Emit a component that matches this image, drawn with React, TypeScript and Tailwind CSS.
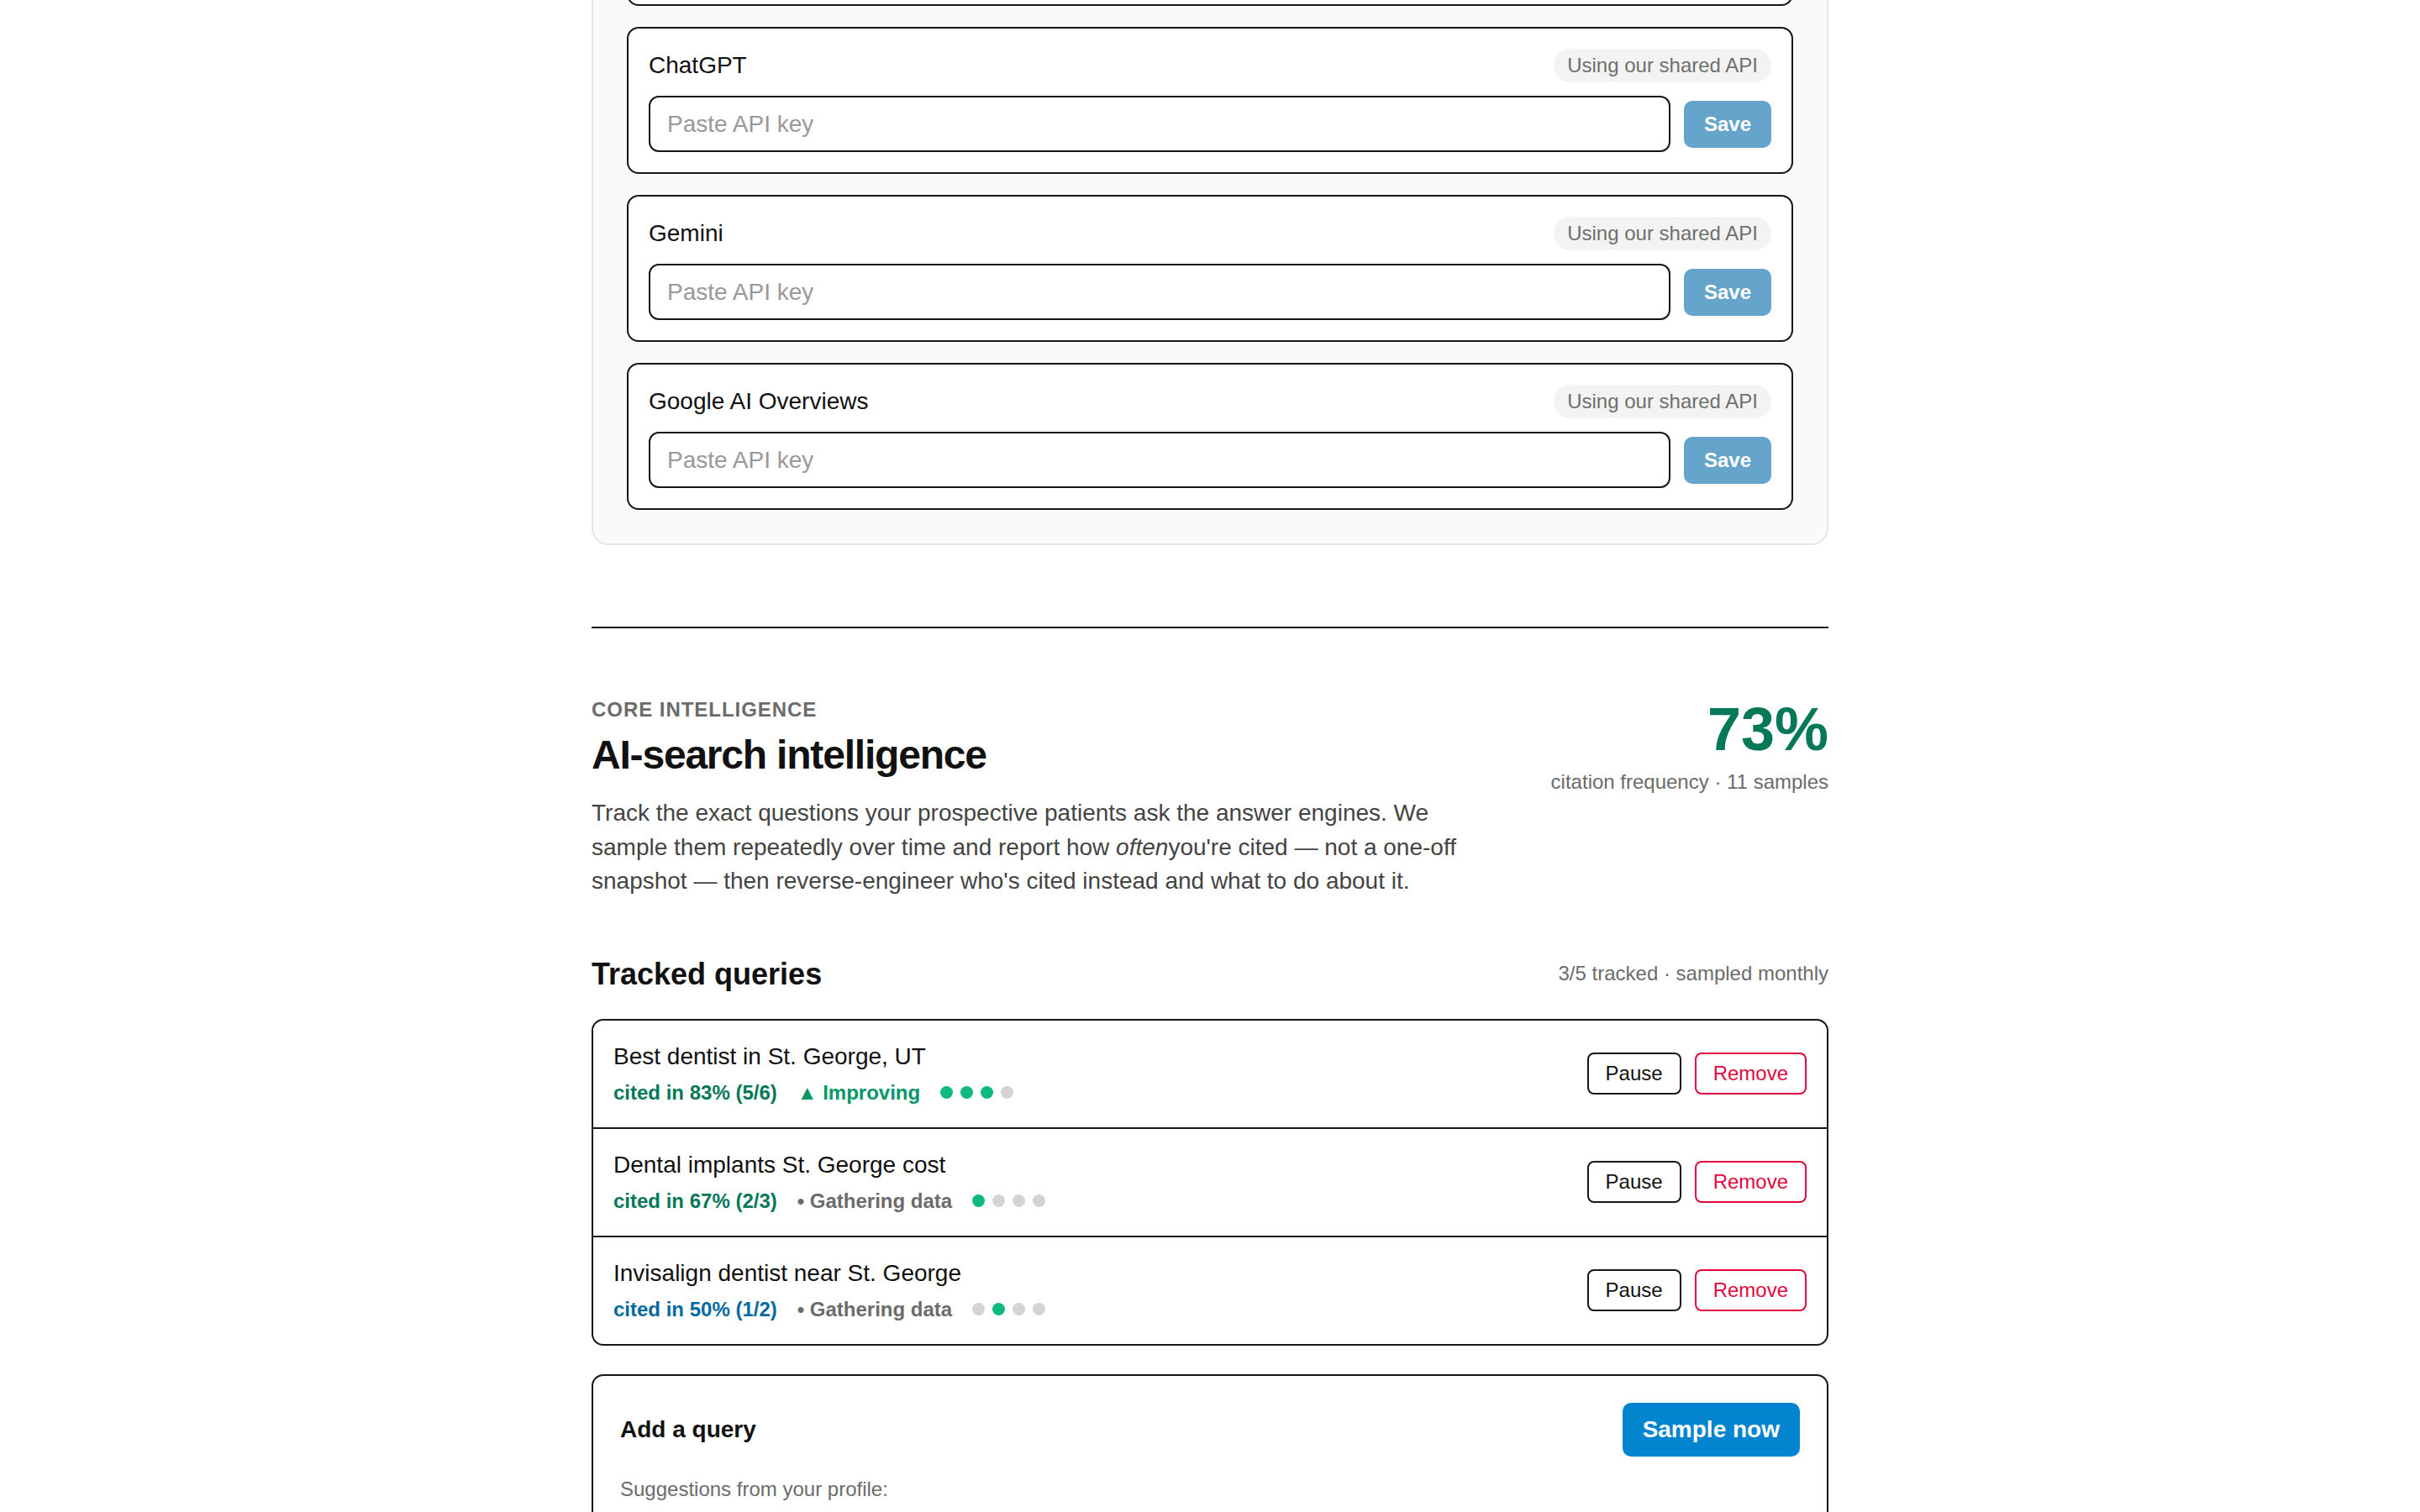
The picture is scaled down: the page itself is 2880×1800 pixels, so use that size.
import React from "react";

function KeyCard({ name }: { name: string }) {
  return (
    <div className="flex flex-col gap-4 rounded-[14px] border-2 border-[#161616] bg-white p-6">
      <div className="flex h-10 items-center justify-between">
        <span className="text-[28px] leading-[36px] text-[#111]">{name}</span>
        <span className="flex h-10 items-center rounded-full bg-[#f3f3f3] px-4 text-[24px] text-[#6f6f6f]">
          Using our shared API
        </span>
      </div>
      <div className="flex items-center gap-4">
        <input
          placeholder="Paste API key"
          className="h-[67px] min-w-0 flex-1 rounded-[12px] border-2 border-[#161616] bg-white px-5 text-[28px] text-[#111] outline-none placeholder:text-[#999]"
        />
        <button className="rounded-[10px] bg-[#65a5cc] px-6 py-[10px] text-[24px] font-bold leading-[36px] text-white">
          Save
        </button>
      </div>
    </div>
  );
}

type Dot = "g" | "x";

function Dots({ dots }: { dots: Dot[] }) {
  return (
    <span className="flex items-center gap-[9px]">
      {dots.map((d, i) => (
        <span
          key={i}
          className={
            d === "g"
              ? "h-[15px] w-[15px] rounded-full bg-[#10b981]"
              : "h-[15px] w-[15px] rounded-full bg-[#d4d4d4]"
          }
        />
      ))}
    </span>
  );
}

function QueryRow({
  title,
  cited,
  citedClass,
  status,
  statusClass,
  dots,
}: {
  title: string;
  cited: string;
  citedClass: string;
  status: string;
  statusClass: string;
  dots: Dot[];
}) {
  return (
    <div className="flex items-center justify-between px-6 py-[25px]">
      <div className="flex flex-col">
        <div className="text-[28px] leading-[36px] text-[#111]">{title}</div>
        <div className="mt-[9px] flex items-center gap-6 text-[24px] font-bold leading-[32px]">
          <span className={citedClass}>{cited}</span>
          <span className={statusClass}>{status}</span>
          <Dots dots={dots} />
        </div>
      </div>
      <div className="flex items-center gap-4">
        <button className="rounded-[8px] border-2 border-[#161616] bg-white px-5 py-[5px] text-[24px] leading-[36px] text-[#111]">
          Pause
        </button>
        <button className="rounded-[8px] border-2 border-[#e3063f] bg-white px-5 py-[5px] text-[24px] leading-[36px] text-[#e3063f]">
          Remove
        </button>
      </div>
    </div>
  );
}

export default function App() {
  return (
    <div className="min-h-screen bg-white font-['Liberation_Sans',Arial,Helvetica,sans-serif] text-[#111]">
      <div className="mx-auto mt-[-210px] w-[1472px] pb-24">
        <div className="flex flex-col gap-[25px] rounded-[20px] border-2 border-[#e6e6e6] bg-[#fafafa] p-10">
          <KeyCard name="Perplexity" />
          <KeyCard name="ChatGPT" />
          <KeyCard name="Gemini" />
          <KeyCard name="Google AI Overviews" />
        </div>

        <div className="mt-[97px] border-t-2 border-[#161616]" />

        <div className="mt-[80px] flex items-start justify-between">
          <div className="w-[1060px]">
            <div className="text-[24px] font-bold uppercase leading-[33px] tracking-[0.04em] text-[#6b6b6b]">
              Core intelligence
            </div>
            <h2 className="mt-[10px] text-[48px] font-bold leading-[55px] tracking-[-0.025em] text-[#111]">
              AI-search intelligence
            </h2>
            <p className="mt-[22px] text-[28px] leading-[40.5px] text-[#444]">
              Track the exact questions your prospective patients ask the answer engines. We sample them repeatedly
              over time and report how <em>often</em>you're cited — not a one-off snapshot — then reverse-engineer
              who's cited instead and what to do about it.
            </p>
          </div>
          <div className="mt-[4px] flex flex-col items-end">
            <div className="text-[72px] font-bold leading-[72px] text-[#047857]">73%</div>
            <div className="mt-[10px] text-[24px] leading-[33px] text-[#6b6b6b]">
              citation frequency · 11 samples
            </div>
          </div>
        </div>

        <div className="mt-[68px] flex items-center justify-between">
          <h3 className="text-[36px] font-bold leading-[43px] text-[#111]">Tracked queries</h3>
          <span className="text-[24px] text-[#6b6b6b]">3/5 tracked · sampled monthly</span>
        </div>

        <div className="mt-8 divide-y-2 divide-[#161616] rounded-[14px] border-2 border-[#161616] bg-white">
          <QueryRow
            title="Best dentist in St. George, UT"
            cited="cited in 83% (5/6)"
            citedClass="text-[#047857]"
            status="▲ Improving"
            statusClass="text-[#059669]"
            dots={["g", "g", "g", "x"]}
          />
          <QueryRow
            title="Dental implants St. George cost"
            cited="cited in 67% (2/3)"
            citedClass="text-[#047857]"
            status="• Gathering data"
            statusClass="text-[#6b6b6b]"
            dots={["g", "x", "x", "x"]}
          />
          <QueryRow
            title="Invisalign dentist near St. George"
            cited="cited in 50% (1/2)"
            citedClass="text-[#0369a1]"
            status="• Gathering data"
            statusClass="text-[#6b6b6b]"
            dots={["x", "g", "x", "x"]}
          />
        </div>

        <div className="mt-[34px] rounded-[14px] border-2 border-[#161616] bg-white p-8">
          <div className="flex items-center justify-between">
            <span className="text-[28px] font-bold leading-[40px] text-[#111]">Add a query</span>
            <button className="rounded-[10px] bg-[#0284cf] px-6 py-3 text-[28px] font-bold leading-[40px] text-white">
              Sample now
            </button>
          </div>
          <div className="mt-[21px] text-[24px] leading-[36px] text-[#6b6b6b]">Suggestions from your profile:</div>
          <div className="mt-4 flex flex-wrap gap-3">
            {["Emergency dentist St. George", "Cosmetic dentist near me", "Teeth whitening St. George"].map((s) => (
              <span key={s} className="rounded-full border-2 border-[#d4d4d4] px-4 py-1 text-[22px] text-[#333]">
                + {s}
              </span>
            ))}
          </div>
          <div className="mt-6 flex items-center gap-4">
            <input
              placeholder="Type a question patients might ask…"
              className="h-[64px] min-w-0 flex-1 rounded-[12px] border-2 border-[#161616] px-5 text-[26px] outline-none placeholder:text-[#9a9a9a]"
            />
            <button className="rounded-[10px] border-2 border-[#161616] px-6 py-3 text-[26px] font-bold leading-[36px]">
              Add
            </button>
          </div>
        </div>
      </div>
    </div>
  );
}
